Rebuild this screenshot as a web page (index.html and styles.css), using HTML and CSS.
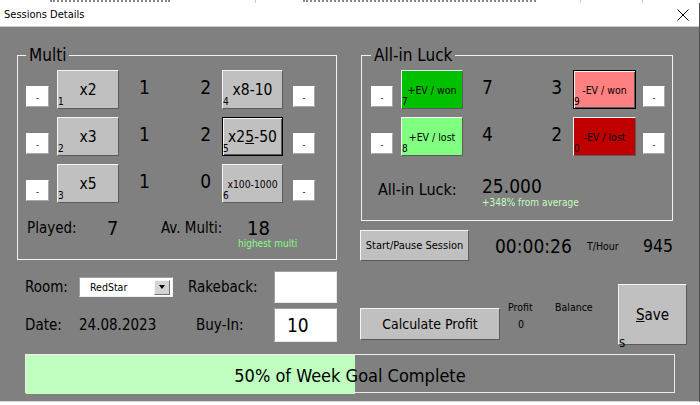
FILE: index.html
```html
<!DOCTYPE html>
<html lang="en">
<head>
<meta charset="utf-8">
<title>Sessions Details</title>
<link rel="stylesheet" href="styles.css">
</head>
<body>
<div class="sheet">
  <div class="cell c1"><span class="ink w-a"></span></div>
  <div class="cell c2"><span class="ink w-b"></span></div>
  <div class="cell c3"></div>
  <div class="cell c4"></div>
</div>
<div class="window">
  <div class="titlebar">
    <span class="title">Sessions Details</span>
    <svg class="close" width="12" height="12" viewBox="0 0 12 12"><path d="M0.5 0.5L11.5 11.5M11.5 0.5L0.5 11.5" stroke="#000" stroke-width="1" fill="none"/></svg>
  </div>
  <div class="client">
    <div class="columns">
      <div class="col-left">
        <fieldset class="frame multi">
          <legend>Multi</legend>
          <div class="grid mgrid">
            <button class="minus">-</button>
            <button class="btn w62">x2<span class="idx">1</span></button>
            <span class="num na">1</span>
            <span class="num nb">2</span>
            <button class="btn w61">x8-10<span class="idx">4</span></button>
            <button class="minus m22">-</button>

            <button class="minus">-</button>
            <button class="btn w62">x3<span class="idx">2</span></button>
            <span class="num na">1</span>
            <span class="num nb">2</span>
            <button class="btn w61 focus">x2<u>5</u>-50<span class="idx">5</span></button>
            <button class="minus m22">-</button>

            <button class="minus">-</button>
            <button class="btn w62">x5<span class="idx">3</span></button>
            <span class="num na">1</span>
            <span class="num nb">0</span>
            <button class="btn w61 small">x100-1000<span class="idx">6</span></button>
            <button class="minus m22">-</button>
          </div>
          <div class="stats">
            <span class="st-label w1">Played:</span>
            <span class="st-val w2">7</span>
            <span class="st-label w3">Av. Multi:</span>
            <div class="st-group">
              <span class="st-val pad">18</span>
              <span class="hint">highest multi</span>
            </div>
          </div>
        </fieldset>
        <div class="form">
          <span class="lbl">Room:</span>
          <div class="select-cell">
            <div class="select"><span>RedStar</span><span class="arrow"></span></div>
          </div>
          <span class="lbl">Rakeback:</span>
          <div class="input"></div>
          <span class="lbl">Date:</span>
          <span class="lbl">24.08.2023</span>
          <span class="lbl pl">Buy-In:</span>
          <div class="input">10</div>
        </div>
      </div>
      <div class="col-right">
        <fieldset class="frame luck">
          <legend>All-in Luck</legend>
          <div class="grid lgrid">
            <button class="minus m22">-</button>
            <button class="btn w62 ev g1">+EV / won<span class="idx">7</span></button>
            <span class="num na">7</span>
            <span class="num nb">3</span>
            <button class="btn w63 ev r1 focus">-EV / won<span class="idx">9</span></button>
            <button class="minus m22">-</button>

            <button class="minus m22">-</button>
            <button class="btn w62 ev g2">+EV / lost<span class="idx">8</span></button>
            <span class="num na">4</span>
            <span class="num nb">2</span>
            <button class="btn w63 ev r2">-EV / lost<span class="idx">0</span></button>
            <button class="minus m22">-</button>
          </div>
          <div class="luck-sum">
            <span class="sum-label">All-in Luck:</span>
            <div class="sum-group">
              <span class="sum-val">25.000</span>
              <span class="sum-hint">+348% from average</span>
            </div>
          </div>
        </fieldset>
        <div class="timer">
          <button class="btn sp-btn">Start/Pause Session</button>
          <span class="clock">00:00:26</span>
          <span class="thour">T/Hour</span>
          <span class="t945">945</span>
        </div>
        <div class="profit">
          <button class="btn calc">Calculate Profit</button>
          <div class="pcol">
            <span class="plabel">Profit</span>
            <span class="pval">0</span>
          </div>
          <div class="bcol">
            <span class="plabel">Balance</span>
          </div>
          <button class="btn save"><span><u>S</u>ave</span><span class="save-s">S</span></button>
        </div>
      </div>
    </div>
    <div class="progress">
      <div class="fill" style="width:50.8%"></div>
      <div class="ptext">50% of Week Goal Complete</div>
    </div>
  </div>
</div>
</body>
</html>
```

FILE: styles.css
```css
* { box-sizing: border-box; margin: 0; padding: 0; }
html, body { width: 700px; height: 405px; overflow: hidden; background: #fff; }
body {
  font-family: "DejaVu Sans Condensed", "DejaVu Sans", sans-serif;
  font-stretch: condensed;
  color: #000;
}
button { font-family: inherit; font-stretch: condensed; color: #000; cursor: default; }

/* spreadsheet strip behind the dialog (only the descender tips show) */
.sheet { height: 3px; overflow: hidden; display: flex; background: #fff; }
.cell { height: 3px; border-right: 1px solid #c8c8c8; overflow: hidden; }
.ink { display: block; height: 2px; border-bottom: 2px dotted #555; opacity: 0.7; }
.w-a { width: 120px; }
.w-b { width: 233px; }
.c1 { width: 256px; padding-left: 50px; }
.c2 { width: 325px; padding-left: 47px; }
.c3 { width: 62px; }
.c4 { flex: 1; border-right: none; }

.window { width: 700px; border-right: 1px solid #505050; }

.titlebar {
  height: 24px; background: #fff; border-bottom: 1px solid #c8c8c8;
  display: flex; align-items: center; justify-content: space-between;
  padding: 0 10px 0 4px;
}
.title { font-size: 11px; }
.close { display: block; }

.client {
  background: #808080; height: 375px;
  padding: 18px 0 0 17px;
  border-bottom: 1px solid #d8d8d8;
}
.columns { display: flex; height: 300px; }
.col-left { width: 320px; }
.col-right { width: 330px; margin-left: 23px; }

.frame { border: 1px solid #f2f2f2; min-width: 0; }
.frame legend { font-size: 17px; line-height: 20px; padding: 0 3px; }
.multi { padding: 5px 0 10px 8px; }
.luck { width: 312px; margin-left: 1px; padding: 5px 0 11px 9px; }

.grid { display: grid; grid-auto-rows: 39px; row-gap: 8px; align-items: center; }
.mgrid { grid-template-columns: 31px 62px 48px 55px 71px 22px; }
.lgrid { grid-template-columns: 30px 62px 48px 62px 70px 22px; }

.minus {
  width: 23px; height: 21px; align-self: end; margin-bottom: 2px;
  background: #fff; border: 1px solid; border-color: #fff #a8a8a8 #a8a8a8 #fff;
  font-size: 9px; line-height: 1; padding-top: 3px;
}
.m22 { width: 22px; }

.btn {
  position: relative; height: 39px;
  background: #c0c0c0; border: 1px solid;
  border-color: #f4f4f4 #5a5a5a #5a5a5a #f4f4f4;
  font-size: 15.5px;
  display: flex; align-items: center; justify-content: center;
  white-space: nowrap;
}
.w62 { width: 62px; }
.w61 { width: 61px; }
.w63 { width: 63px; }
.small { font-size: 10.3px; }
.focus { border-color: #000; box-shadow: inset 1px 1px 0 #f4f4f4, inset -1px -1px 0 #5a5a5a; }
.idx { position: absolute; left: 0; bottom: 1px; font-size: 10px; line-height: 10px; }

.ev { font-size: 10.5px; }
.g1 { background: #00c000; }
.g2 { background: #80ff80; }
.r1 { background: #ff8080; }
.r2 { background: #c00000; }

.num { font-size: 19px; line-height: 22px; margin-top: -5px; }
.na { padding-left: 20px; }
.lgrid .na { padding-left: 19px; }
.nb { text-align: right; padding-right: 11px; }

.stats { display: flex; height: 46px; padding-top: 12px; align-items: flex-start; }
.st-label { font-size: 15px; line-height: 26px; padding-left: 1px; }
.w1 { width: 81px; }
.w2 { width: 53px; }
.w3 { width: 78px; }
.st-val { font-size: 20px; line-height: 26px; }
.st-group { display: flex; flex-direction: column; }
.pad { padding-left: 9px; }
.hint { font-size: 10px; line-height: 12px; color: #80ff80; margin-top: -3px; }

.form {
  display: grid;
  grid-template-columns: 54px 109px 86px 63px;
  grid-template-rows: 32px 34px;
  row-gap: 5px; align-items: center;
  margin-top: 11px; padding-left: 8px;
}
.lbl { font-size: 15px; }
.pl { padding-left: 8px; }
.select {
  width: 94px; height: 20px; background: #fff;
  border: 1px solid; border-color: #a0a0a0 #f0f0f0 #f0f0f0 #a0a0a0;
  display: flex; align-items: center; justify-content: space-between;
  padding-left: 10px; font-size: 10.5px;
}
.arrow {
  width: 16px; height: 15px; margin-right: 2px;
  background: #d4d4d4; border: 1px solid;
  border-color: #f4f4f4 #707070 #707070 #f4f4f4;
  display: flex; align-items: center; justify-content: center;
}
.arrow::before {
  content: ""; border-left: 3.5px solid transparent; border-right: 3.5px solid transparent;
  border-top: 4px solid #000;
}
.input {
  height: 100%; background: #fff;
  border: 1px solid; border-color: #a0a0a0 #e8e8e8 #e8e8e8 #a0a0a0;
  font-size: 19px; padding-left: 12px;
  display: flex; align-items: center;
}

.luck-sum { display: flex; align-items: flex-start; padding-top: 17px; }
.sum-label { width: 111px; padding-left: 7px; font-size: 16px; line-height: 26px; margin-top: 4px; }
.sum-group { display: flex; flex-direction: column; }
.sum-val { font-size: 19px; line-height: 26px; }
.sum-hint { font-size: 10px; line-height: 12px; margin-top: -2px; color: #c0ffc0; }

.timer { display: flex; align-items: center; margin-top: 9px; height: 31px; }
.sp-btn { width: 109px; height: 31px; font-size: 11px; }
.clock { font-size: 19px; margin-left: 26px; width: 92px; }
.thour { font-size: 10.5px; width: 56px; }
.t945 { font-size: 17.5px; }

.profit { display: flex; align-items: flex-start; margin-top: 23px; }
.calc { width: 140px; height: 32px; margin-top: 24px; font-size: 14px; }
.pcol, .bcol { display: flex; flex-direction: column; margin-top: 16px; }
.pcol { width: 47px; margin-left: 8px; }
.bcol { width: 63px; }
.plabel { font-size: 10.5px; line-height: 14px; }
.pval { font-size: 10.5px; line-height: 14px; margin-top: 3px; padding-left: 10px; }
.save { width: 69px; height: 61px; font-size: 15px; }
.save-s { position: absolute; left: 0; bottom: -5px; font-size: 11px; line-height: 11px; }

.progress {
  margin: 9px 0 0 8px; width: 650px; height: 39px;
  border: 1px solid #ececec;
  display: grid;
}
.fill { grid-area: 1 / 1; background: #c0ffc0; }
.ptext { grid-area: 1 / 1; text-align: center; font-size: 18px; line-height: 37px; padding-top: 2px; }
```
